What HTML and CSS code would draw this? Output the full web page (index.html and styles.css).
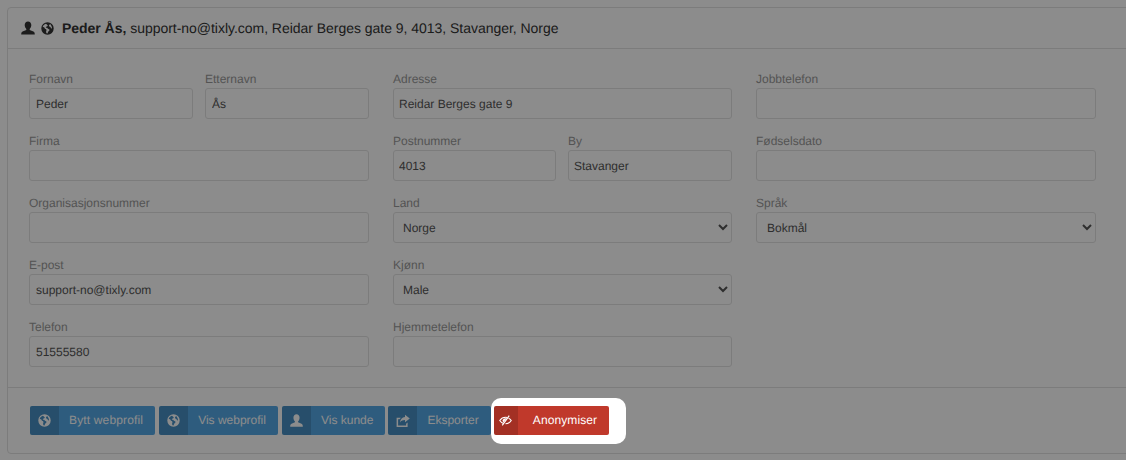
FILE: index.html
```html
<!DOCTYPE html>
<html lang="no">
<head>
<meta charset="utf-8">
<title>Peder Ås</title>
<link rel="stylesheet" href="styles.css">
</head>
<body>
<svg class="defs" width="0" height="0" aria-hidden="true">
  <symbol id="i-user" viewBox="0 0 14 14"><path d="M7 .4c-2 0-3.300 1.500-3.300 3.600 0 1.500.6 3 1.600 3.900v1.100L1.600 10.500C.6 11 .2 11.800.2 13.600h13.600c0-1.800-.4-2.600-1.400-3.100L8.700 9V7.900c1-.9 1.600-2.400 1.600-3.900C10.300 1.900 9 .4 7 .4z"/></symbol>
  <symbol id="i-globe" viewBox="0 0 14 14"><path fill-rule="evenodd" d="M7 .3a6.700 6.700 0 1 1 0 13.400A6.700 6.700 0 0 1 7 .3zM5.300 1.800C3.600 2.300 2.300 3.600 1.800 5.200l1.800.7.700 1.500 1.300.5.300 1.400-.6 1.500 1 1.600 1-.3.200-1.500 1.300-1 .3-1.600-1.600-.7-1-1-1.300-.1.300-1.200 1.300-.3.500-1.200zm4.600.4L8.500 3.500l.7 1.600 1 .2.500 1.500 1.200.3c0-2-1-3.800-2-4.900z"/></symbol>
  <symbol id="i-share" viewBox="0 0 14 14"><path d="M9 .8l4.800 3.700L9 8.200V6c-2.200 0-3.800.7-5 2.500C4.200 5.500 6 3.200 9 3zM.6 3.800h4.300L3.500 5.200H2.100v6.400h8V9.700l1.500-1.200v4.600H.6z"/></symbol>
  <symbol id="i-eye" viewBox="0 0 14 14"><path fill="none" stroke="#fff" stroke-width="1.200" d="M5 10.300C3.200 9.700 1.800 8.500.8 7 2.300 4.800 4.500 3.500 7 3.500c.7 0 1.400.1 2 .3M10.300 4.600C11.500 5.200 12.400 6 13.200 7c-1.500 2.200-3.700 3.500-6.200 3.500"/><path fill="#fff" d="M8.300 4.700L4.900 9C4.200 8.400 3.900 7.700 3.900 7c0-1.800 2.300-3 4.400-2.300z"/><path fill="none" stroke="#fff" stroke-width="1.300" d="M11 1.800L3.500 12.200"/></symbol>
</svg>
<main class="panel">
  <header class="panel-head">
    <svg class="head-icon"><use href="#i-user"/></svg>
    <svg class="head-icon head-icon-globe"><use href="#i-globe"/></svg>
    <p class="head-text"><strong>Peder Ås,</strong> support-no@tixly.com, Reidar Berges gate 9, 4013, Stavanger, Norge</p>
  </header>
  <form class="panel-body">
    <div class="col">
      <div class="pair">
        <label class="field"><span class="lbl">Fornavn</span><input class="ctl" value="Peder"></label>
        <label class="field"><span class="lbl">Etternavn</span><input class="ctl" value="Ås"></label>
      </div>
      <label class="field"><span class="lbl">Firma</span><input class="ctl"></label>
      <label class="field"><span class="lbl">Organisasjonsnummer</span><input class="ctl"></label>
      <label class="field"><span class="lbl">E-post</span><input class="ctl" value="support-no@tixly.com"></label>
      <label class="field"><span class="lbl">Telefon</span><input class="ctl" value="51555580"></label>
    </div>
    <div class="col col-mid">
      <label class="field"><span class="lbl">Adresse</span><input class="ctl" value="Reidar Berges gate 9"></label>
      <div class="pair pair-mid">
        <label class="field"><span class="lbl">Postnummer</span><input class="ctl" value="4013"></label>
        <label class="field"><span class="lbl">By</span><input class="ctl" value="Stavanger"></label>
      </div>
      <label class="field"><span class="lbl">Land</span><select class="ctl sel"><option>Norge</option></select></label>
      <label class="field"><span class="lbl">Kjønn</span><select class="ctl sel"><option>Male</option></select></label>
      <label class="field"><span class="lbl">Hjemmetelefon</span><input class="ctl"></label>
    </div>
    <div class="col col-end">
      <label class="field"><span class="lbl">Jobbtelefon</span><input class="ctl"></label>
      <label class="field"><span class="lbl">Fødselsdato</span><input class="ctl"></label>
      <label class="field"><span class="lbl">Språk</span><select class="ctl sel"><option>Bokmål</option></select></label>
    </div>
  </form>
  <footer class="panel-foot">
    <button class="btn btn-wide" type="button"><span class="btn-ic"><svg class="ic"><use href="#i-globe"/></svg></span><span class="btn-tx">Bytt webprofil</span></button>
    <button class="btn" type="button"><span class="btn-ic"><svg class="ic"><use href="#i-globe"/></svg></span><span class="btn-tx">Vis webprofil</span></button>
    <button class="btn" type="button"><span class="btn-ic"><svg class="ic"><use href="#i-user"/></svg></span><span class="btn-tx">Vis kunde</span></button>
    <button class="btn btn-tight" type="button"><span class="btn-ic"><svg class="ic ic-share"><use href="#i-share"/></svg></span><span class="btn-tx">Eksporter</span></button>
    <div class="spot">
      <button class="btn btn-red" type="button"><span class="btn-ic"><svg class="ic"><use href="#i-eye"/></svg></span><span class="btn-tx">Anonymiser</span></button>
    </div>
  </footer>
</main>
</body>
</html>
```
FILE: styles.css
```css
* { box-sizing: border-box; }
html, body { height: 100%; }
body {
  margin: 0;
  padding: 7px 0 0 7px;
  background: #fff;
  overflow: hidden;
  font-family: "Liberation Sans", Arial, sans-serif;
  font-size: 12px;
  color: #333;
  text-rendering: geometricPrecision;
}
.defs { position: absolute; }
.panel {
  width: 1135px;
  height: 447px;
  border: 1px solid #e2e2e2;
  border-radius: 4px;
  display: flex;
  flex-direction: column;
}
.panel-head {
  height: 41px;
  display: flex;
  align-items: center;
  gap: 6px;
  padding: 0 13px;
  border-bottom: 1px solid #e2e2e2;
}
.head-icon { width: 14px; height: 14px; fill: #333; }
.head-icon-globe { width: 13px; height: 13px; }
.head-text { margin: 0 0 0 2px; font-size: 14px; letter-spacing: -.03px; }
.panel-body {
  flex: 1;
  display: grid;
  grid-template-columns: 340px 339px 340px;
  column-gap: 24px;
  padding: 20px 0 0 21px;
  align-items: start;
}
.col { display: flex; flex-direction: column; gap: 12px; }
.pair { display: grid; grid-template-columns: 1fr 1fr; column-gap: 12px; }
.pair-mid { grid-template-columns: 163px 164px; }
.field { display: flex; flex-direction: column; }
.lbl { height: 19px; line-height: 21px; color: #999; font-size: 12px; }
.ctl {
  width: 100%;
  height: 31px;
  padding: 0 6px;
  border: 1px solid #e2e2e2;
  border-radius: 3px;
  background: #fff;
  color: #555;
  font: 12px "Liberation Sans", Arial, sans-serif;
  text-rendering: geometricPrecision;
}
.sel { padding-left: 5px; }
.col-mid input.ctl { padding-left: 5px; }
.col-end .sel { padding-left: 6px; }
.panel-foot {
  height: 66px;
  flex: none;
  display: flex;
  align-items: flex-start;
  gap: 4px;
  padding: 18px 0 0 22px;
  border-top: 1px solid #e2e2e2;
}
.btn {
  display: flex;
  align-items: stretch;
  height: 29px;
  padding: 0;
  border: 0;
  border-radius: 2px;
  background: #54a8e6;
  color: #fff;
  overflow: hidden;
  font: 12px "Liberation Sans", Arial, sans-serif;
  text-rendering: geometricPrecision;
}
.btn-wide .btn-tx { letter-spacing: .15px; }
.btn-tight { margin-left: -1px; }
.btn-ic {
  width: 29px;
  display: flex;
  align-items: center;
  justify-content: center;
  background: rgba(0,0,0,.15);
}
.ic { width: 13px; height: 13px; fill: #fff; }
.ic-share { width: 14px; height: 14px; }
.btn-tx { padding: 0 12px 0 10px; line-height: 29px; }
.spot {
  position: relative;
  z-index: 5;
  margin: -8px 0 0 -4px;
  padding: 8px 17px 9px 3px;
  border-radius: 10px;
  background: #fff;
  box-shadow: 0 0 0 2000px rgba(0,0,0,.45);
}
.btn-red { background: #c0392b; }
.btn-red .btn-ic { width: 24px; }
.btn-red .btn-tx { padding: 0 12px 0 15px; letter-spacing: .1px; }
```
